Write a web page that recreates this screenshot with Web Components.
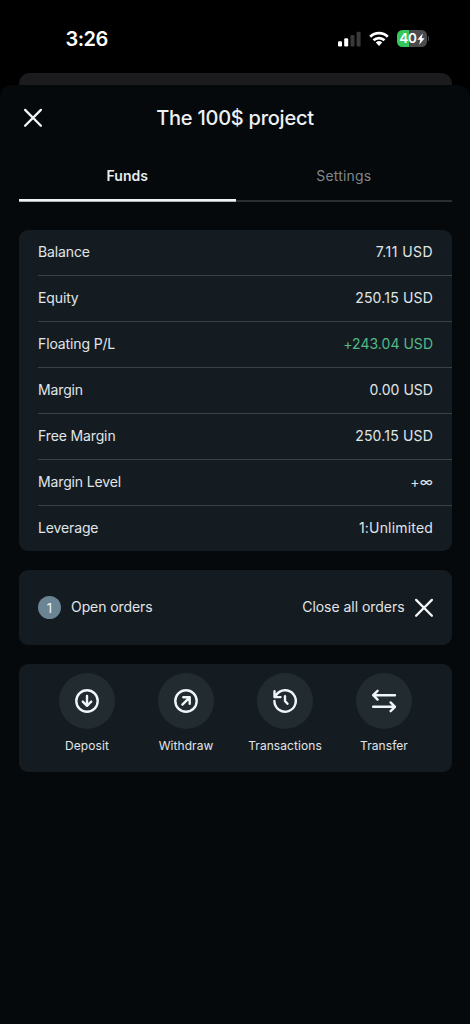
<!DOCTYPE html>
<html lang="en">
<head>
<meta charset="utf-8">
<title>The 100$ project</title>
<style>
html,body{margin:0;background:#000}
body{font-family:Inter,"Liberation Sans",sans-serif;color:#e0e5e8;overflow:hidden}
</style>
</head>
<body>
<account-screen></account-screen>
<script>
const define = (name, css, html) => {
  const t = document.createElement('template');
  t.innerHTML = `<style>*{box-sizing:border-box}${css}</style>${html}`;
  customElements.define(name, class extends HTMLElement {
    constructor() {
      super();
      this.attachShadow({mode: 'open'}).append(t.content.cloneNode(true));
    }
  });
};

define('status-bar', `
:host{display:flex;height:73px;box-sizing:border-box;padding:4px 41px 0 65.5px;align-items:center;justify-content:space-between;color:#fff}
.time{font-size:20px;font-weight:600;letter-spacing:-.5px;line-height:24px}
.right{display:flex;align-items:center;gap:8px}
svg{display:block}
.bat{display:flex;align-items:center;gap:1px}
.cell{display:flex;align-items:center;justify-content:center;padding-left:1px;width:30px;height:17px;border-radius:5.5px;background:linear-gradient(90deg,#34c759 12px,#4b4b4d 12px);font-size:13.5px;font-weight:600;line-height:17px;letter-spacing:-.2px}
.nub{width:1.5px;height:5px;border-radius:0 2px 2px 0;background:#4b4b4d}
`, `
<span class="time">3:26</span>
<div class="right">
<svg width="23" height="16" viewBox="0 0 23 16"><rect x="0" y="10.3" width="4" height="5.2" rx="1.2" fill="#fff"/><rect x="6.2" y="7.3" width="4" height="8.2" rx="1.2" fill="#fff"/><rect x="12.5" y="4" width="4" height="11.5" rx="1.2" fill="#39393b"/><rect x="18.6" y=".7" width="4" height="14.8" rx="1.2" fill="#39393b"/></svg>
<svg width="20" height="16" viewBox="0 0 20 16"><g fill="none" stroke="#fff" stroke-width="2.7"><path d="M1.2 5.8a12.5 12.5 0 0 1 17.6 0"/><path d="M4.5 9.3a7.9 7.9 0 0 1 11 0"/></g><path d="M6.8 11.6a4.7 4.7 0 0 1 6.4 0L10 15Z" fill="#fff"/></svg>
<div class="bat"><div class="cell"><span>40</span><svg width="8" height="12" viewBox="0 0 7 11"><path d="M5.2.3.2 6.2h2.7L1.8 10.7 6.8 4.7H4.1Z" fill="#fff"/></svg></div><div class="nub"></div></div>
</div>`);

define('sheet-header', `
:host{display:grid;grid-template-columns:28px 1fr 28px;align-items:center;height:65px;padding:0 19px}
h1{margin:0;text-align:center;font-size:20px;font-weight:500;line-height:24px;letter-spacing:-.25px;color:#edf1f3}
`, `<close-icon></close-icon><h1><slot></slot></h1>`);

define('close-icon', `
:host{display:block;width:28px;height:20px}svg{display:block;margin:auto}
`, `<svg width="20" height="20" viewBox="0 0 20 20"><path d="M2.1 1.9 17.9 17.7M17.9 1.9 2.1 17.7" fill="none" stroke="#f3f6f8" stroke-width="2.3" stroke-linecap="round"/></svg>`);

define('tab-bar', `
:host{display:grid;grid-template-columns:1fr 1fr;height:52px;margin:0 18px 0 19px;background:linear-gradient(#2a2e31,#2a2e31) 0 50px/100% 2px no-repeat}
`, `<slot></slot>`);

define('tab-item', `
:host{display:flex;height:52px;box-sizing:border-box;align-items:center;justify-content:center;font-size:14px;line-height:20px;letter-spacing:.18px;color:#81868a;background:linear-gradient(transparent,transparent) 0 49px/100% 3px no-repeat}
:host([active]){color:#e8edef;font-weight:600;letter-spacing:0;background-image:linear-gradient(#f0f2f3 2px,#aeb1b3 2px)}
`, `<slot></slot>`);

define('panel-card', `
:host{display:block;box-sizing:border-box;margin:0 18px 0 19px;border-radius:9px;background:#141c21;overflow:hidden}
`, `<slot></slot>`);

define('fund-row', `
:host{display:flex;box-sizing:border-box;justify-content:space-between;align-items:center;height:46px;margin-left:19px;padding:0 19px 1px 0;border-bottom:1px solid #3b4246;font-size:14px;letter-spacing:-.13px;line-height:20px}
:host([last]){border:0;height:45px}
.v{letter-spacing:var(--track,.18px)}
:host([gain]) .v{color:#55b888}
`, `<span><slot name="label"></slot></span><span class="v"><slot></slot></span>`);

define('orders-row', `
:host{display:flex;align-items:center;height:75px;padding:0 18px 0 19px;font-size:14px;line-height:20px;letter-spacing:-.08px}
.n{width:23px;height:23px;border-radius:50%;background:#6b8595;display:grid;place-items:center;margin-right:10px;font-size:13px;letter-spacing:0;color:#f0f4f6}
.t{padding-bottom:1px}
.c{margin-left:auto;letter-spacing:-.04px}
close-icon{width:20px;margin-left:9.5px}
`, `<span class="n"><slot name="count"></slot></span><span class="t"><slot></slot></span><span class="t c">Close all orders</span><close-icon></close-icon>`);

define('action-list', `
:host{display:grid;grid-template-columns:repeat(4,1fr);height:108px;padding:9px 18.5px 0 18.5px}
`, `<slot></slot>`);

define('action-item', `
:host{display:flex;flex-direction:column;align-items:center;font-size:12px;letter-spacing:.07px;line-height:16px;white-space:nowrap}
.i{width:56px;height:56px;border-radius:50%;background:#222b30;display:grid;place-items:center;margin-bottom:9px}
::slotted(svg){display:block;width:28px;height:28px;fill:none;stroke:#f0f5f9;stroke-width:2.4;stroke-linecap:round;stroke-linejoin:round}
`, `<div class="i"><slot name="icon"></slot></div><slot></slot>`);

define('account-screen', `
:host{display:flex;flex-direction:column;width:470px;height:1024px;background:#000}
.back{height:12px;margin:0 18px 0 19px;border-radius:11px 11px 0 0;background:#1b1b1e}
.sheet{flex:1;background:#05090c;border-radius:12px 12px 0 0}
tab-bar{margin-bottom:28px}
panel-card{margin-bottom:19px}
.o{margin-bottom:18.5px}
.wide{--track:.43px}
.tight{--track:.02px}
`, `
<status-bar></status-bar>
<div class="back"></div>
<div class="sheet">
<sheet-header>The 100$ project</sheet-header>
<tab-bar><tab-item active>Funds</tab-item><tab-item>Settings</tab-item></tab-bar>
<panel-card>
<fund-row class="wide"><span slot="label">Balance</span>7.11 USD</fund-row>
<fund-row><span slot="label">Equity</span>250.15 USD</fund-row>
<fund-row gain class="tight"><span slot="label">Floating P/L</span>+243.04 USD</fund-row>
<fund-row class="tight"><span slot="label">Margin</span>0.00 USD</fund-row>
<fund-row><span slot="label">Free Margin</span>250.15 USD</fund-row>
<fund-row><span slot="label">Margin Level</span>+∞</fund-row>
<fund-row last><span slot="label">Leverage</span>1:Unlimited</fund-row>
</panel-card>
<panel-card class="o"><orders-row><span slot="count">1</span>Open orders</orders-row></panel-card>
<panel-card><action-list>
<action-item><svg slot="icon" viewBox="0 0 28 28"><circle cx="14" cy="14" r="10.7"/><path d="M14 9v9.2M9.8 14.6l4.2 4.2 4.2-4.2"/></svg>Deposit</action-item>
<action-item><svg slot="icon" viewBox="0 0 28 28"><circle cx="14" cy="14" r="10.7"/><path d="M10.4 17.6l7-7M11.3 10.3h6.4v6.4"/></svg>Withdraw</action-item>
<action-item><svg slot="icon" viewBox="0 0 28 28"><path d="M3.4 14A10.7 10.7 0 1 0 5.2 8M3.5 4.2v5.9h6M14 9.2v4.8l2.5 2.8"/></svg>Transactions</action-item>
<action-item><svg slot="icon" viewBox="0 0 28 28"><path d="M25 8.2H3.2M7.6 3.8 3.2 8.2l4.4 4.4M3.2 19.8H25M20.6 15.4l4.4 4.4-4.4 4.4"/></svg>Transfer</action-item>
</action-list></panel-card>
</div>`);
</script>
</body>
</html>
